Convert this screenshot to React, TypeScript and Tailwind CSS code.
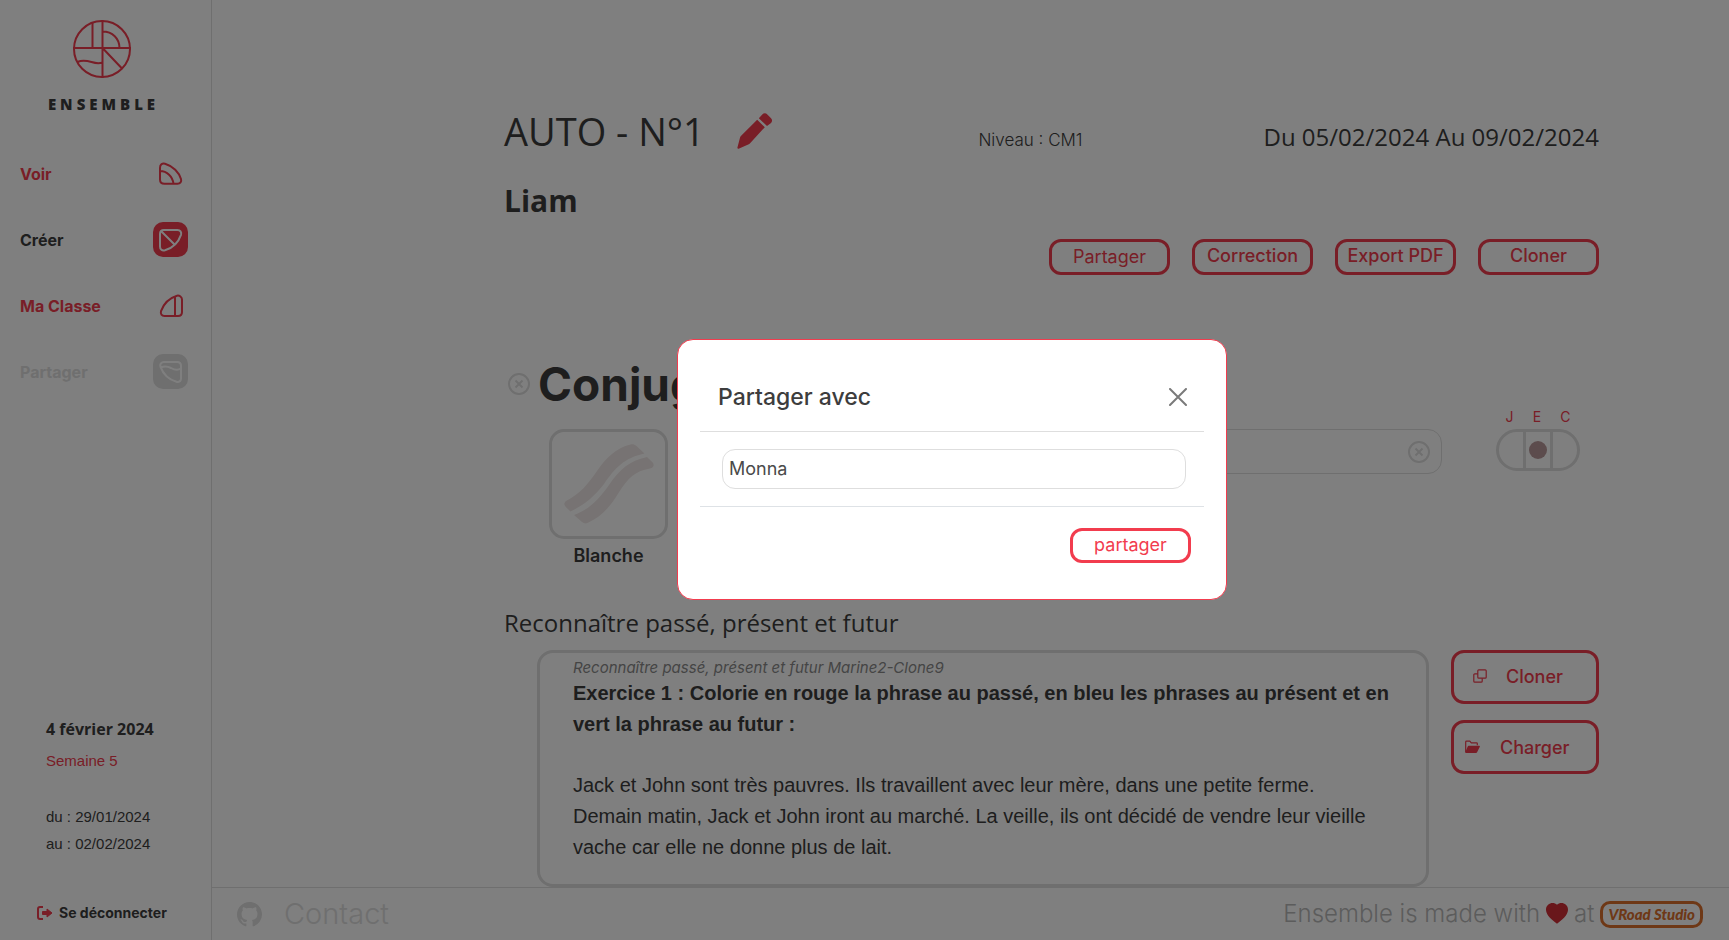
import { useState } from "react";
import type { ReactNode } from "react";
import { BsFillHeartFill, BsGithub } from "react-icons/bs";

const round = "font-['Open_Sans',sans-serif]";

function Logo() {
  return (
    <svg viewBox="0 0 60 60" className="h-[60px] w-[60px]" fill="none" stroke="#f23c4e" strokeWidth="2" aria-hidden="true">
      <circle cx="30" cy="30" r="28" />
      <path d="M30.500 1v58M1 29h58M20.500 4v25M30.500 12.500C40.500 12.500 47.500 19.500 47.500 29M31 29.500l19 20M5.500 43c5-2.500 9-1.500 14 0s8 1.500 11 .500" />
    </svg>
  );
}

function SeeIcon() {
  return (
    <svg viewBox="0 0 24 24" className="h-6 w-6" fill="none" stroke="currentColor" strokeWidth="2" aria-hidden="true">
      <path d="M1 17.500V6C1 2.700 3 1 6 1.700 14 4 20 10.500 22 17c.8 2.800-.8 4.800-3.500 4.800H5.500C2.800 21.800 1 20.300 1 17.500zM1 9c7 0 12.700 5.500 13.500 12.800" />
    </svg>
  );
}

function CreateIcon() {
  return (
    <svg viewBox="0 0 24 24" className="h-6 w-6" fill="none" stroke="currentColor" strokeWidth="2" aria-hidden="true">
      <path d="M1 6C1 3.500 2.500 2 5 2h13.500c2.700 0 4.300 2 3.500 4.800C19.500 14 13.500 20 6 22.300 3 23 1 21.500 1 18.500zM2.500 3.500l13.500 13.500" />
    </svg>
  );
}

function ClassIcon() {
  return (
    <svg viewBox="0 0 24 24" className="h-6 w-6" fill="none" stroke="currentColor" strokeWidth="2" aria-hidden="true">
      <path d="M2 17.200C4.500 10 10.500 4 18 1.700 20.500 1.200 23 3 23 5.500V18c0 2.500-1.500 4-4 4H5.500c-2.700 0-4.300-2-3.500-4.800zM16 2.500V22" />
    </svg>
  );
}

function ShareIcon() {
  return (
    <svg viewBox="0 0 24 24" className="h-6 w-6" fill="none" stroke="currentColor" strokeWidth="2" aria-hidden="true">
      <path d="M22 6c0-2.500-1.500-4-4-4H5C2.300 2 .700 4 1.500 6.800 4 13.500 10 19.500 17.500 21.800c2.500.700 4.500-.8 4.500-3.300zM1.800 7.500c4-2 6.500-1.500 10.200.500 3.500 2 7 2.500 10 .500" />
    </svg>
  );
}

function PencilIcon() {
  return (
    <svg viewBox="1 1 33 33" className="h-9 w-9" fill="#f23c4e" aria-hidden="true">
      <path d="M19.500 7.200 26.500 14 13 28.800c-.500.500-1 .8-1.700 1L2.500 33.700c-.8.200-1.300-.300-1.100-1.100L3.800 23.500c.200-.7.500-1.200 1-1.700zM21 5.700l3.200-3.400C25.500 1 27.500 1 28.800 2.300L32 5.500c1.500 1.500 1.500 3.300.200 4.700l-3.700 2.800z" />
    </svg>
  );
}

function LogoutIcon() {
  return (
    <svg viewBox="0 0 16 14" className="h-[14px] w-4" fill="none" stroke="#f23c4e" strokeWidth="2" aria-hidden="true">
      <path d="M6 1H3C1.700 1 1 1.700 1 3v8c0 1.300.700 2 2 2h3" />
      <path d="M5.500 5.500H10V3l5 4-5 4V8.500H5.500z" fill="#f23c4e" strokeWidth="1" strokeLinejoin="round" />
    </svg>
  );
}

function ClearIcon() {
  return (
    <svg viewBox="0 0 22 22" className="h-[22px] w-[22px]" fill="none" stroke="#dedede" strokeWidth="2" aria-hidden="true">
      <circle cx="11" cy="11" r="10" />
      <path d="M7.500 7.500l7 7M14.500 7.500l-7 7" />
    </svg>
  );
}

function CopyIcon() {
  return (
    <svg viewBox="0 0 14 14" className="h-[14px] w-[14px]" fill="none" stroke="currentColor" strokeWidth="1.200" aria-hidden="true">
      <rect x="4.800" y="0.800" width="8.400" height="8.400" rx="1" />
      <path d="M4.800 4.800h-3a1 1 0 0 0-1 1v6.400a1 1 0 0 0 1 1h6.400a1 1 0 0 0 1-1v-3" />
    </svg>
  );
}

function FolderIcon() {
  return (
    <svg viewBox="0 0 15 14" className="h-[14px] w-[15px]" aria-hidden="true">
      <path d="M.7 12V2c0-.5.300-.8.8-.8h3.300l1.500 1.600h5.200c.5 0 .8.300.8.800v1.600" fill="none" stroke="currentColor" strokeWidth="1.200" />
      <path d="M3.600 5.800h10.600c.6 0 .9.500.600 1l-2.700 5.500c-.2.400-.6.700-1.100.7H1c-.6 0-.9-.5-.6-1l2.300-5.600c.2-.4.500-.6.900-.6z" fill="currentColor" />
    </svg>
  );
}

function RibbonIcon() {
  return (
    <svg viewBox="0 0 92 82" className="h-[82px] w-[92px]" fill="#efe7e6" aria-hidden="true">
      <path d="M3 58C.500 60.500 1 62 3 64.200L7.500 68.500C21 62 31 54 41 41 52 25 61 15 81.500 10.500L73.500 3c-2-1.700-3.500-2-6-1.500C53 5 43 15 34 28 25 41 18 50 3 58z" />
      <path d="M11 72 19 79c2 1.700 4 1.700 6 .7C38 74 47 64 55.500 50 65 35 72 28 87 25.500c3.500-.8 4.700-3.500 2.700-6L84 14C66 18 57 26 46 42 36 56 27 66 11 72z" />
    </svg>
  );
}

type NavEntry = { label: string; icon: ReactNode; text: string; tile: string };

const nav: NavEntry[] = [
  { label: "Voir", icon: <SeeIcon />, text: "text-[#f23c4e]", tile: "text-[#f23c4e]" },
  { label: "Créer", icon: <CreateIcon />, text: "text-[#3d3d3d]", tile: "bg-[#f23c4e] text-white" },
  { label: "Ma Classe", icon: <ClassIcon />, text: "text-[#f23c4e]", tile: "text-[#f23c4e]" },
  { label: "Partager", icon: <ShareIcon />, text: "text-[#dedede]", tile: "bg-[#dedede] text-white" },
];

const actions = ["Partager", "Correction", "Export PDF", "Cloner"];

function Sidebar() {
  return (
    <aside className="flex w-[212px] shrink-0 flex-col border-r border-[#dedede]">
      <div className="flex flex-col items-center pt-[19px] pr-2">
        <Logo />
        <p className={`${round} mt-[15px] pl-1 text-[15px] leading-5 font-extrabold tracking-[4px]`}>ENSEMBLE</p>
      </div>
      <nav className="mt-[42px] flex flex-col gap-[31px] pr-[23px] pl-5">
        {nav.map((n) => (
          <a key={n.label} href={`#${n.label}`} className={`flex items-center justify-between text-[16px] leading-5 font-bold ${n.text}`}>
            {n.label}
            <span className={`grid h-[35px] w-[35px] place-items-center rounded-[10px] ${n.tile}`}>{n.icon}</span>
          </a>
        ))}
      </nav>
      <div className="mt-auto pb-[17px]">
        <div className="pl-[46px]">
          <p className={`${round} text-[16px] leading-6 font-bold`}>4 février 2024</p>
          <p className="mt-2 font-['Liberation_Sans',sans-serif] text-[15px] leading-6 text-[#f23c4e]">Semaine 5</p>
          <div className="mt-[30px] font-['Liberation_Sans',sans-serif] text-[15px] leading-[27px]">
            <p>du : 29/01/2024</p>
            <p>au : 02/02/2024</p>
          </div>
        </div>
        <button type="button" className="mt-[46px] ml-[37px] flex items-center gap-[6px] text-[14px] leading-5 font-bold">
          <LogoutIcon />
          Se déconnecter
        </button>
      </div>
    </aside>
  );
}

function Selector() {
  const [value, setValue] = useState("E");
  return (
    <div role="radiogroup" aria-label="Mode" className="w-[84px]">
      <div className="flex justify-around text-[14px] leading-5 text-[#f23c4e]">
        {["J", "E", "C"].map((v) => (
          <label key={v} htmlFor={`mode-${v}`}>
            {v}
          </label>
        ))}
      </div>
      <div className="mt-[2px] flex h-[42px] divide-x-[3px] divide-[#dedede] overflow-hidden rounded-full border-[3px] border-[#dedede]">
        {["J", "E", "C"].map((v) => (
          <div key={v} className="grid flex-1 place-items-center">
            <input
              id={`mode-${v}`}
              type="radio"
              name="mode"
              checked={value === v}
              onChange={() => setValue(v)}
              className="h-[18px] w-[18px] appearance-none rounded-full checked:bg-[#b9999a]"
            />
          </div>
        ))}
      </div>
    </div>
  );
}

function Content() {
  return (
    <main className="min-h-0 flex-1 overflow-hidden pt-[104px] pr-[130px] pl-[292px]">
      <header className="grid grid-cols-[1fr_auto_1fr] items-center">
        <h1 className={`${round} flex items-center gap-8 text-[38px] leading-[54px] font-medium whitespace-nowrap`}>
          AUTO - N°1
          <button type="button" aria-label="Modifier">
            <PencilIcon />
          </button>
        </h1>
        <p className="pt-[18px] pr-[42px] text-[17px] leading-6 font-light">Niveau : CM1</p>
        <p className={`${round} pt-[12px] text-right text-[24px] leading-8 font-medium whitespace-nowrap`}>Du 05/02/2024 Au 09/02/2024</p>
      </header>
      <h2 className={`${round} mt-[23px] text-[30px] leading-10 font-bold`}>Liam</h2>

      <div className="mt-[18px] flex justify-end gap-[22px]">
        {actions.map((a) => (
          <button
            key={a}
            type="button"
            className={`h-9 w-[121px] rounded-[12px] border-[3px] border-[#f23c4e] text-[18px] leading-6 text-[#f23c4e] ${a === "Partager" ? "" : "pb-[2px] font-medium"}`}
          >
            {a}
          </button>
        ))}
      </div>

      <section className="mt-[80px]">
        <div className="flex items-center gap-2 pl-1">
          <button type="button" aria-label="Supprimer la matière">
            <ClearIcon />
          </button>
          <h2 className="text-[46px] leading-[58px] font-bold">Conjugaison</h2>
        </div>
        <div className="mt-4 flex items-start pl-[45px]">
          <div className="w-[119px] shrink-0">
            <div className="grid h-[110px] place-items-center rounded-[15px] border-[3px] border-[#dedede]">
              <RibbonIcon />
            </div>
            <p className="mt-[5px] text-center text-[18px] leading-6 font-semibold">Blanche</p>
          </div>
          <div className="ml-10 flex h-[45px] flex-1 items-center rounded-[14px] border border-[#dedede] pr-[11px] pl-4">
            <input aria-label="Leçon" className="h-8 min-w-0 flex-1 outline-none" />
            <button type="button" aria-label="Effacer">
              <ClearIcon />
            </button>
          </div>
          <div className="-mt-[22px] mr-[19px] ml-[54px]">
            <Selector />
          </div>
        </div>
      </section>

      <h3 className={`${round} mt-[39px] text-[24px] leading-8 font-medium`}>Reconnaître passé, présent et futur</h3>
      <div className="mt-[11px] flex items-start gap-[22px]">
        <article className="ml-[33px] flex-1 rounded-[16px] border-[3px] border-[#dedede] px-[33px] pt-[5px] pb-[21px]">
          <p className="text-[15px] leading-[20px] text-[#8a8a8a] italic">Reconnaître passé, présent et futur Marine2-Clone9</p>
          <div className="-mr-4 font-['Liberation_Sans',sans-serif] text-[20px] leading-[31px]">
            <p className="font-bold">
              Exercice 1 : Colorie en rouge la phrase au passé, en bleu les phrases au présent et en
              <br />
              vert la phrase au futur :
            </p>
            <p className="mt-[30px]">
              Jack et John sont très pauvres. Ils travaillent avec leur mère, dans une petite ferme.
              <br />
              Demain matin, Jack et John iront au marché. La veille, ils ont décidé de vendre leur vieille
              <br />
              vache car elle ne donne plus de lait.
            </p>
          </div>
        </article>
        <div className="flex w-[148px] flex-col gap-4 text-[18px] font-medium text-[#f23c4e]">
          <button type="button" className="flex h-[54px] items-center rounded-[13px] border-[3px] border-[#f23c4e] pb-[2px] pl-[19px]">
            <CopyIcon />
            <span className="ml-[19px]">Cloner</span>
          </button>
          <button type="button" className="flex h-[54px] items-center rounded-[13px] border-[3px] border-[#f23c4e] pl-[11px]">
            <FolderIcon />
            <span className="ml-5">Charger</span>
          </button>
        </div>
      </div>
    </main>
  );
}

function Footer() {
  return (
    <footer className="flex h-[53px] shrink-0 items-center justify-between border-t border-[#dedede] pr-[26px] pl-[25px] font-light">
      <div className="flex items-center gap-[22px] text-[29px] text-[#dedede]">
        <a href="#github" aria-label="GitHub">
          <BsGithub className="h-[25px] w-[25px]" />
        </a>
        <a href="#contact">Contact</a>
      </div>
      <p className="flex items-center gap-[6px] text-[24px] text-[#b8b8b8]">
        Ensemble is made with
        <BsFillHeartFill className="h-[22px] w-[22px] text-[#d22f36]" />
        at
        <a
          href="#studio"
          className="flex h-[27px] items-center rounded-[10px] border-[3px] border-[#dc702d] px-[5px] font-['Lato',sans-serif] text-[15px] leading-5 font-black text-[#dc702d] italic"
        >
          VRoad Studio
        </a>
      </p>
    </footer>
  );
}

function ShareDialog() {
  return (
    <div className="fixed inset-0 flex items-center justify-center bg-black/50 pb-[2px] pl-[175px]">
      <div role="dialog" aria-modal="true" aria-labelledby="share-title" className="w-[550px] rounded-[16px] border border-[#f23c4e] bg-white px-[22px] py-[22px]">
        <div className="flex items-center justify-between border-b border-[#dedede] pt-5 pr-[11px] pb-[18px] pl-[18px]">
          <h2 id="share-title" className="text-[23px] leading-[31px] font-medium">
            Partager avec
          </h2>
          <button type="button" aria-label="Fermer" className="p-[6px]">
            <svg viewBox="0 0 18 18" className="h-[18px] w-[18px]" stroke="#7a7a7a" strokeWidth="2" strokeLinecap="round" aria-hidden="true">
              <path d="M1 1l16 16M17 1 1 17" />
            </svg>
          </button>
        </div>
        <div className="border-b border-[#dee2e6] pt-[17px] pr-[18px] pb-[17px] pl-[22px]">
          <input
            aria-labelledby="share-title"
            defaultValue="Monna"
            className="block h-10 w-full rounded-[13px] border border-[#dedede] px-[6px] text-[18px] leading-6 text-[#4a4a4a] outline-none"
          />
        </div>
        <div className="flex justify-end pt-[21px] pr-[13px] pb-[14px]">
          <button type="button" className="h-[35px] w-[121px] rounded-[12px] border-[3px] border-[#f23c4e] text-[18px] leading-6 text-[#f23c4e]">
            partager
          </button>
        </div>
      </div>
    </div>
  );
}

export default function App() {
  return (
    <div className="flex h-screen bg-white font-['Inter',sans-serif] text-[#3d3d3d]">
      <Sidebar />
      <div className="flex min-w-0 flex-1 flex-col">
        <Content />
        <Footer />
      </div>
      <ShareDialog />
    </div>
  );
}
